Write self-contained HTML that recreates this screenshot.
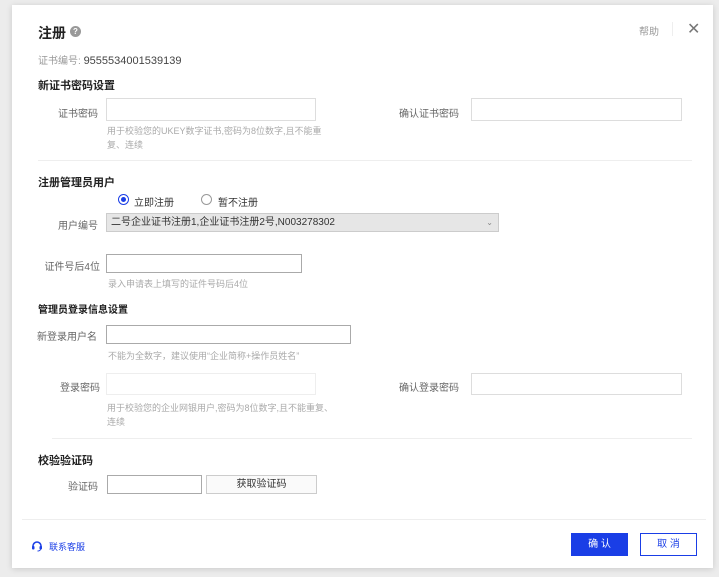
<!DOCTYPE html>
<html><head><meta charset="utf-8"><style>
*{margin:0;padding:0;box-sizing:border-box}
body{width:719px;height:577px;background:#ececec;font-family:"Liberation Sans","Noto Sans CJK SC",sans-serif;position:relative;overflow:hidden}
#d{position:absolute;left:12px;top:5px;width:701px;height:563px;background:#fff;box-shadow:0 1px 6px rgba(0,0,0,.15)}
.a{position:absolute;white-space:nowrap}
.l{font-size:10px;color:#666;text-align:right}
.h{font-size:9px;color:#aaa;line-height:14px}
.b{font-weight:bold;font-size:11px;color:#222}
.i{position:absolute;border:1px solid #ddd;background:#fff}
.i2{position:absolute;border:1px solid #aaa;background:#fff}
.sep{position:absolute;height:1px;background:#eee}
</style></head><body>
<div id="d"></div>
<div class="a" style="left:38px;top:23px;font-size:14px;font-weight:bold;color:#222">注册</div>
<div class="a" style="left:70px;top:26px;width:11px;height:11px;border-radius:50%;background:#999;color:#fff;font-size:8px;text-align:center;line-height:11px;font-weight:bold">?</div>
<div class="a" style="left:639px;top:23px;font-size:10px;color:#999">帮助</div>
<div class="a" style="left:672px;top:22px;width:1px;height:14px;background:#eee"></div>
<div class="a" style="left:687px;top:19px;font-size:16px;color:#777">✕</div>
<div class="a" style="left:38px;top:52px;font-size:10px;color:#999">证书编号: <span style="color:#444;font-size:11px">9555534001539139</span></div>
<div class="a b" style="left:38px;top:77px">新证书密码设置</div>
<div class="a l" style="left:40px;width:58px;top:105px">证书密码</div>
<div class="i" style="left:106px;top:98px;width:210px;height:23px"></div>
<div class="a h" style="left:107px;top:124px">用于校验您的UKEY数字证书,密码为8位数字,且不能重<br>复、连续</div>
<div class="a l" style="left:380px;width:79px;top:105px">确认证书密码</div>
<div class="i" style="left:471px;top:98px;width:211px;height:23px"></div>
<div class="sep" style="left:38px;top:160px;width:654px"></div>
<div class="a b" style="left:38px;top:174px">注册管理员用户</div>
<div class="a" style="left:118px;top:194px;width:11px;height:11px;border:1px solid #1a3ee6;border-radius:50%"><div style="position:absolute;left:2px;top:2px;width:5px;height:5px;border-radius:50%;background:#1a3ee6"></div></div>
<div class="a" style="left:134px;top:194px;font-size:10px;color:#333">立即注册</div>
<div class="a" style="left:201px;top:194px;width:11px;height:11px;border:1px solid #999;border-radius:50%"></div>
<div class="a" style="left:218px;top:194px;font-size:10px;color:#333">暂不注册</div>
<div class="a l" style="left:40px;width:58px;top:217px">用户编号</div>
<div class="a" style="left:106px;top:213px;width:393px;height:19px;background:#e6e6e6;border:1px solid #ccc;font-size:10px;color:#333;line-height:17px;padding-left:4px">二号企业证书注册1,企业证书注册2号,N003278302<span style="position:absolute;right:5px;top:0;color:#888;font-size:8px">⌄</span></div>
<div class="a l" style="left:30px;width:70px;top:258px">证件号后4位</div>
<div class="i2" style="left:106px;top:254px;width:196px;height:19px"></div>
<div class="a h" style="left:108px;top:277px">录入申请表上填写的证件号码后4位</div>
<div class="a" style="left:38px;top:301px;font-size:10px;font-weight:bold;color:#222">管理员登录信息设置</div>
<div class="a l" style="left:30px;width:67px;top:328px">新登录用户名</div>
<div class="i2" style="left:106px;top:325px;width:245px;height:19px"></div>
<div class="a h" style="left:108px;top:349px">不能为全数字，建议使用“企业简称+操作员姓名”</div>
<div class="a l" style="left:40px;width:60px;top:379px">登录密码</div>
<div class="i" style="left:106px;top:373px;width:210px;height:22px;border-color:#eee"></div>
<div class="a h" style="left:107px;top:401px">用于校验您的企业网银用户,密码为8位数字,且不能重复、<br>连续</div>
<div class="a l" style="left:380px;width:79px;top:379px">确认登录密码</div>
<div class="i" style="left:471px;top:373px;width:211px;height:22px"></div>
<div class="sep" style="left:52px;top:438px;width:640px"></div>
<div class="a b" style="left:38px;top:452px">校验验证码</div>
<div class="a l" style="left:40px;width:58px;top:478px">验证码</div>
<div class="i2" style="left:107px;top:475px;width:95px;height:19px"></div>
<div class="a" style="left:206px;top:475px;width:111px;height:19px;border:1px solid #ccc;background:#fafafa;font-size:10px;color:#333;text-align:center;line-height:17px">获取验证码</div>
<div class="sep" style="left:22px;top:519px;width:684px"></div>
<svg class="a" style="left:31px;top:540px" width="12" height="12" viewBox="0 0 12 12"><path d="M2 7V6a4 4 0 0 1 8 0v1" fill="none" stroke="#1a3ee6" stroke-width="1.6"/><rect x="1" y="6" width="2.5" height="3.5" rx="1" fill="#1a3ee6"/><rect x="8.5" y="6" width="2.5" height="3.5" rx="1" fill="#1a3ee6"/><path d="M9.5 9.5Q9 11 6.5 11" fill="none" stroke="#1a3ee6" stroke-width="1"/></svg>
<div class="a" style="left:49px;top:540px;font-size:9px;color:#1a3ee6">联系客服</div>
<div class="a" style="left:571px;top:533px;width:57px;height:23px;background:#1a3ee6;color:#fff;font-size:10px;text-align:center;line-height:23px">确 认</div>
<div class="a" style="left:640px;top:533px;width:57px;height:23px;border:1px solid #1a3ee6;color:#1a3ee6;font-size:10px;text-align:center;line-height:21px;background:#fff">取 消</div>
</body></html>
